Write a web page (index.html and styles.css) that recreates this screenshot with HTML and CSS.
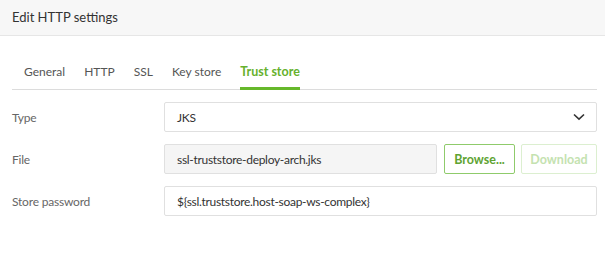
FILE: index.html
```html
<!DOCTYPE html>
<html lang="en">
  <head>
    <meta charset="UTF-8" />
    <meta name="viewport" content="width=device-width, initial-scale=1.0" />
    <title>Edit HTTP settings</title>
    <link rel="stylesheet" href="styles.css">
  </head>
  <body>
    <div class="modal-header">Edit HTTP settings</div>
    <div class="modal-body">
      <ul class="tabs">
        <li class="tab">General</li>
        <li class="tab">HTTP</li>
        <li class="tab">SSL</li>
        <li class="tab">Key store</li>
        <li class="tab active">Trust store</li>
      </ul>
      <div class="form">
        <div class="form-row">
          <label class="form-label">Type</label>
          <div class="form-field">
            <div class="select">
              <span>JKS</span>
              <svg class="chevron" width="12" height="8" viewBox="0 0 12 8">
                <path d="M1 1.5 L6 6.2 L11 1.5" fill="none" stroke="#333" stroke-width="1.6" />
              </svg>
            </div>
          </div>
        </div>
        <div class="form-row">
          <label class="form-label">File</label>
          <div class="form-field file-field">
            <div class="input readonly">ssl-truststore-deploy-arch.jks</div>
            <button class="btn btn-browse">Browse...</button>
            <button class="btn btn-download" disabled>Download</button>
          </div>
        </div>
        <div class="form-row">
          <label class="form-label">Store password</label>
          <div class="form-field">
            <div class="input">${ssl.truststore.host-soap-ws-complex}</div>
          </div>
        </div>
      </div>
    </div>
  </body>
</html>
```

FILE: styles.css
```css
body {
  margin: 0;
  background: #fff;
  font-family: "Lato", "Open Sans", sans-serif;
  font-size: 12px;
  color: #333;
}

.modal-header {
  height: 35px;
  line-height: 35px;
  padding-left: 12px;
  background-color: #f7f7f7;
  border-bottom: 1px solid #e6e6e6;
  font-size: 13px;
  color: #333;
}

.modal-body {
  padding: 0 8px 0 12px;
}

.tabs {
  display: flex;
  gap: 19px;
  list-style: none;
  margin: 20px 0 0;
  padding: 0 0 0 12px;
  border-bottom: 1px solid #dcdcdc;
}

.tab {
  padding: 6px 0 5px;
  line-height: 20px;
  margin-bottom: -1px;
  border-bottom: 3px solid transparent;
  color: #555;
  font-size: 12px;
}

.tab.active {
  color: #66b12d;
  font-weight: bold;
  font-size: 12.5px;
  border-bottom-color: #66b82a;
}

.form {
  display: flex;
  flex-direction: column;
  gap: 12px;
  margin-top: 12px;
}

.form-row {
  display: flex;
  align-items: center;
}

.form-label {
  width: 152px;
  flex: 0 0 152px;
  color: #666;
  letter-spacing: -0.2px;
}

.form-field {
  flex: 1;
  display: flex;
  gap: 6px;
}

.select,
.input {
  flex: 1;
  height: 30px;
  box-sizing: border-box;
  border: 1px solid #e0e0e0;
  border-radius: 2px;
  padding: 0 12px;
  display: flex;
  align-items: center;
  color: #333;
  letter-spacing: -0.3px;
}

.select {
  justify-content: space-between;
}

.chevron {
  margin-right: -1px;
}

.input.readonly {
  background-color: #f5f5f5;
  margin-right: 1px;
}

.btn {
  height: 30px;
  box-sizing: border-box;
  background: #fff;
  border-radius: 2px;
  font-family: inherit;
  font-size: 12.5px;
  font-weight: bold;
  padding: 0 8px;
  cursor: pointer;
}

.btn-browse {
  width: 71px;
  border: 1px solid #8fcb6b;
  color: #5ea332;
}

.btn-download {
  width: 76px;
  border: 1px solid #dcefd0;
  color: #c4e2b0;
  cursor: default;
}
```
